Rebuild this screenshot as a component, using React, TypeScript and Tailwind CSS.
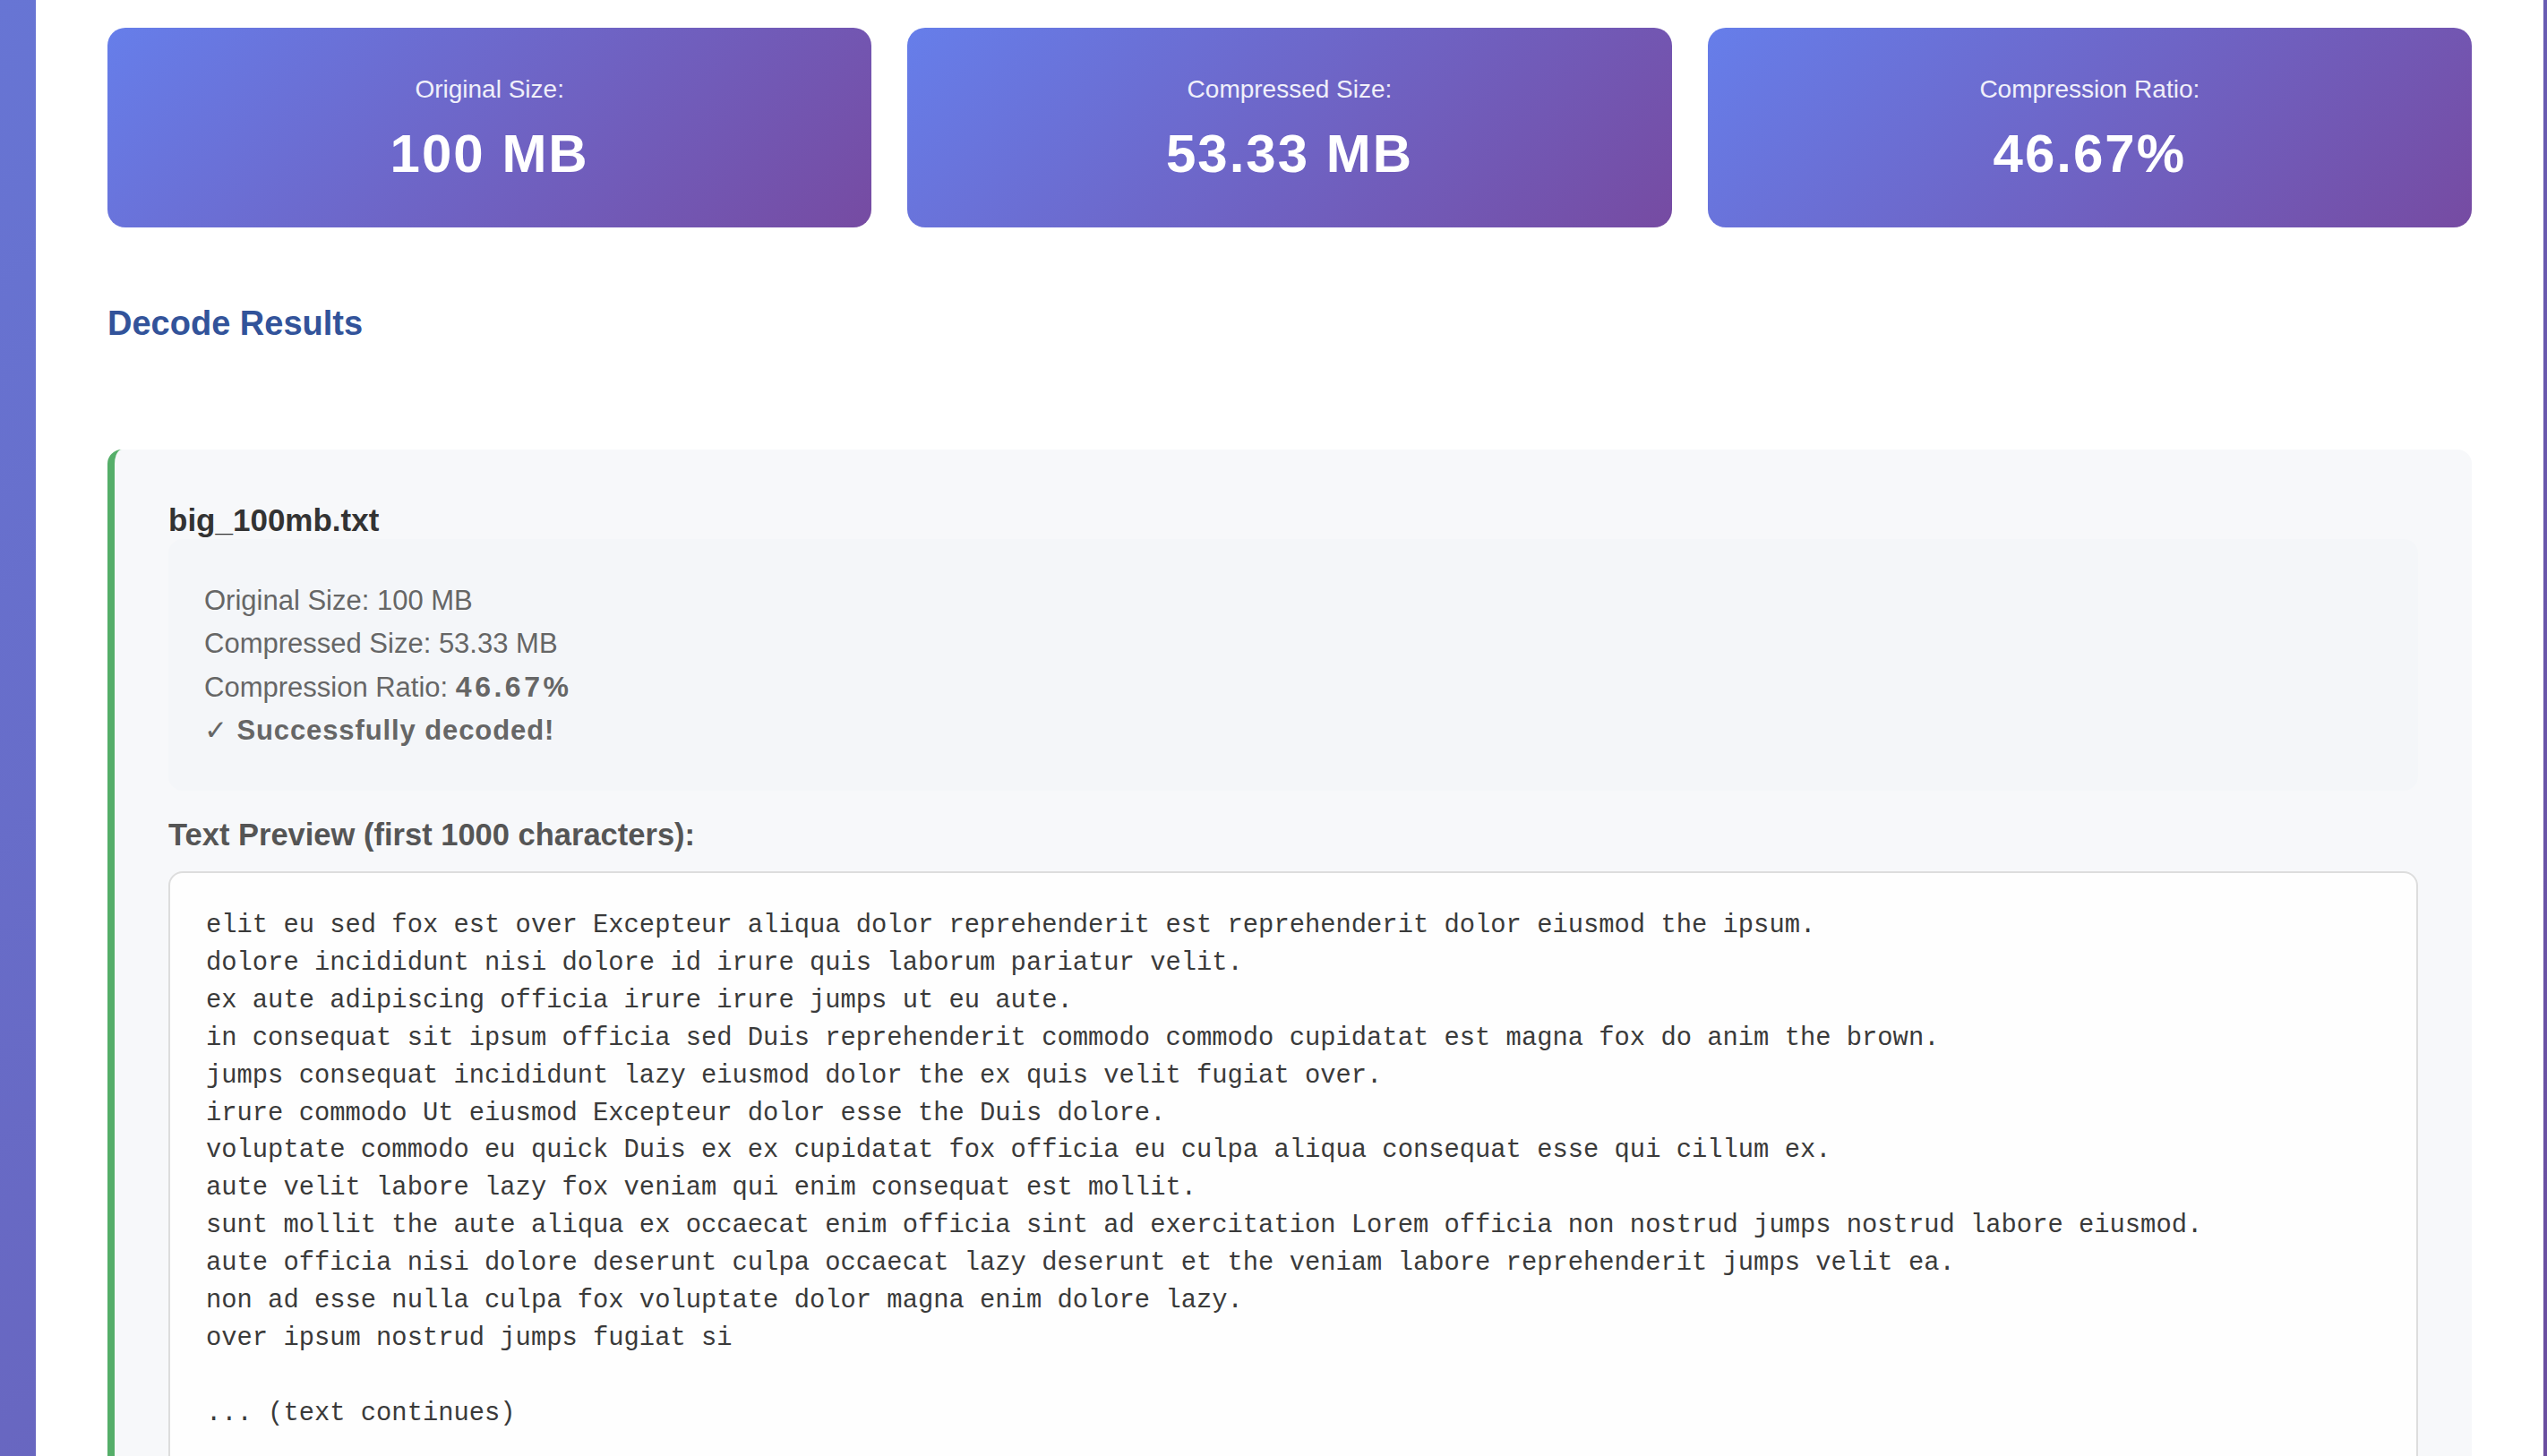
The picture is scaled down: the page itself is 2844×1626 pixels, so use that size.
// Decode results page: stats cards + per-file decode result with text preview
const stats = [
  { label: "Original Size:", value: "100 MB" },
  { label: "Compressed Size:", value: "53.33 MB" },
  { label: "Compression Ratio:", value: "46.67%" },
];

const previewLines = [
  "elit eu sed fox est over Excepteur aliqua dolor reprehenderit est reprehenderit dolor eiusmod the ipsum.",
  "dolore incididunt nisi dolore id irure quis laborum pariatur velit.",
  "ex aute adipiscing officia irure irure jumps ut eu aute.",
  "in consequat sit ipsum officia sed Duis reprehenderit commodo commodo cupidatat est magna fox do anim the brown.",
  "jumps consequat incididunt lazy eiusmod dolor the ex quis velit fugiat over.",
  "irure commodo Ut eiusmod Excepteur dolor esse the Duis dolore.",
  "voluptate commodo eu quick Duis ex ex cupidatat fox officia eu culpa aliqua consequat esse qui cillum ex.",
  "aute velit labore lazy fox veniam qui enim consequat est mollit.",
  "sunt mollit the aute aliqua ex occaecat enim officia sint ad exercitation Lorem officia non nostrud jumps nostrud labore eiusmod.",
  "aute officia nisi dolore deserunt culpa occaecat lazy deserunt et the veniam labore reprehenderit jumps velit ea.",
  "non ad esse nulla culpa fox voluptate dolor magna enim dolore lazy.",
  "over ipsum nostrud jumps fugiat si",
];

export default function App() {
  const previewText = previewLines.join("\n") + "\n\n... (text continues)";

  return (
    <div className="h-[1626px] overflow-hidden bg-[linear-gradient(135deg,#6775d4,#6a4e9f)] pl-[40px] pr-[4px] font-['Liberation_Sans','DejaVu_Sans',sans-serif]">
      <div className="w-[2800px] h-full bg-white px-[80px] pt-[31px]">
        {/* 요약 카드 */}
        <div className="grid grid-cols-3 gap-[40px]">
          {stats.map((s) => (
            <div
              key={s.label}
              className="h-[223px] rounded-[20px] bg-[linear-gradient(135deg,#667eea,#764ba2)] text-center text-white pt-[52px]"
            >
              <p className="text-[28px] leading-[34px] text-white/90">{s.label}</p>
              <p className="mt-[21px] text-[60px] leading-[68px] font-bold tracking-[2px]">{s.value}</p>
            </div>
          ))}
        </div>

        {/* 디코드 결과 */}
        <h3 className="mt-[84px] text-[38px] leading-[46px] font-bold text-[#32539a]">Decode Results</h3>

        <div className="mt-[118px] rounded-[16px] border-l-[8px] border-[#55ae69] bg-[#f7f8fa] pl-[60px] pr-[60px] pt-[58px] pb-[60px]">
          <h4 className="text-[35px] leading-[42px] font-bold text-[#333]">big_100mb.txt</h4>

          <div className="rounded-[16px] bg-[#f4f6f9] px-[40px] pt-[45px] pb-[43px] text-[31px] leading-[48px] text-[#666]">
            <p>Original Size: 100 MB</p>
            <p>Compressed Size: 53.33 MB</p>
            <p>
              Compression Ratio: <strong className="font-bold text-[32px] tracking-[3.5px]">46.67%</strong>
            </p>
            <p className="font-bold tracking-[0.9px]">✓ Successfully decoded!</p>
          </div>

          <p className="mt-[28px] text-[34.5px] leading-[42px] font-bold text-[#555]">
            Text Preview (first 1000 characters):
          </p>

          <pre className="mt-[20px] rounded-[16px] border-2 border-[#dddddd] bg-[#fefefe] px-[40px] pt-[38px] pb-[40px] font-['Liberation_Mono','Courier_New',monospace] text-[28.8px] leading-[41.9px] text-[#3a3a3a] whitespace-pre-wrap">
            {previewText}
          </pre>
        </div>
      </div>
    </div>
  );
}
